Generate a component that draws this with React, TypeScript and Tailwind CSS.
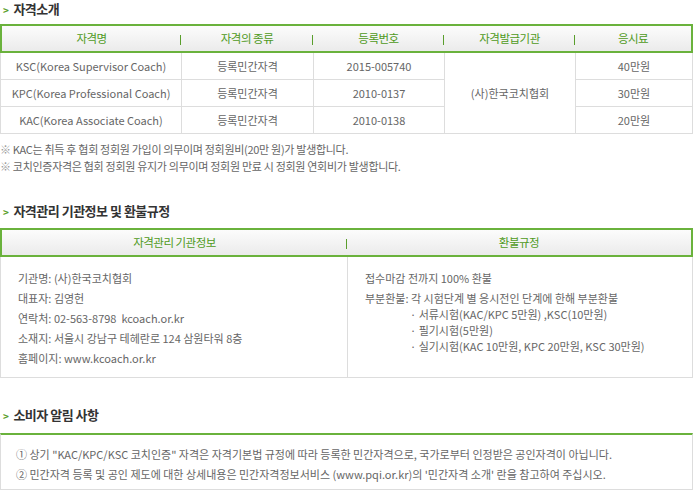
import React from 'react';

const font = { fontFamily: '"Noto Sans CJK KR", "Noto Sans", sans-serif' };

function SectionTitle({ children }: { children: React.ReactNode }) {
    return (
        <div className="flex items-center h-[18px] text-[13px] font-bold text-[#333] tracking-[-0.5px]">
            <span className="text-[#5a9e2c] text-[10px] font-bold ml-[3px] mr-[5px]">&gt;</span>
            {children}
        </div>
    );
}

function HeadCell({ children, sep = true }: { children: React.ReactNode; sep?: boolean }) {
    return (
        <div className="relative flex items-center justify-center text-[#4f9a22]">
            {children}
            {sep && <span className="absolute right-0 top-[9px] h-[10px] w-px bg-[#5a9e2c]" />}
        </div>
    );
}

const rows = [
    { name: 'KSC(Korea Supervisor Coach)', no: '2015-005740', fee: '40만원' },
    { name: 'KPC(Korea Professional Coach)', no: '2010-0137', fee: '30만원' },
    { name: 'KAC(Korea Associate Coach)', no: '2010-0138', fee: '20만원' },
];

export default function App() {
    return (
        <div className="w-[694px] h-[494px] bg-white text-[11px] text-[#666] overflow-hidden" style={font}>
            {/* 자격소개 */}
            <SectionTitle>자격소개</SectionTitle>
            <div className="mt-[6px] w-[693px]">
                <div className="grid grid-cols-[179px_132px_131px_131px_1fr] h-[29px] border-2 border-[#6ab23c] bg-gradient-to-b from-[#fcfcfc] to-[#ebebeb] text-[11.5px] tracking-[-0.5px]">
                    <HeadCell>자격명</HeadCell>
                    <HeadCell>자격의 종류</HeadCell>
                    <HeadCell>등록번호</HeadCell>
                    <HeadCell>자격발급기관</HeadCell>
                    <HeadCell sep={false}>응시료</HeadCell>
                </div>
                <div className="grid grid-cols-[181px_132px_131px_131px_1fr] grid-rows-[27px_27px_27px] border-l border-r border-[#ddd]">
                    {rows.map((r, i) => (
                        <React.Fragment key={r.no}>
                            <div className="flex items-center justify-center border-b border-r border-[#ddd]" style={{ gridRow: i + 1, gridColumn: 1 }}>{r.name}</div>
                            <div className="flex items-center justify-center border-b border-r border-[#ddd]" style={{ gridRow: i + 1, gridColumn: 2 }}>등록민간자격</div>
                            <div className="flex items-center justify-center border-b border-r border-[#ddd]" style={{ gridRow: i + 1, gridColumn: 3 }}>{r.no}</div>
                            <div className="flex items-center justify-center border-b border-[#ddd]" style={{ gridRow: i + 1, gridColumn: 5 }}>{r.fee}</div>
                        </React.Fragment>
                    ))}
                    <div className="row-span-3 col-start-4 row-start-1 flex items-center justify-center border-b border-r border-[#ddd]">
                        (사)한국코치협회
                    </div>
                </div>
            </div>
            <div className="mt-[7px] text-[11px] leading-[17px] tracking-[-0.3px]">
                <p><span className="text-[#999]">※</span> KAC는 취득 후 협회 정회원 가입이 의무이며 정회원비(20만 원)가 발생합니다.</p>
                <p><span className="text-[#999]">※</span> 코치인증자격은 협회 정회원 유지가 의무이며 정회원 만료 시 정회원 연회비가 발생합니다.</p>
            </div>

            {/* 자격관리 기관정보 및 환불규정 */}
            <div className="mt-[27px]">
                <SectionTitle>자격관리 기관정보 및 환불규정</SectionTitle>
            </div>
            <div className="mt-[8px] w-[693px]">
                <div className="grid grid-cols-[345px_1fr] h-[29px] border-2 border-[#6ab23c] bg-gradient-to-b from-[#fcfcfc] to-[#ebebeb] text-[11.5px] tracking-[-0.5px]">
                    <HeadCell>자격관리 기관정보</HeadCell>
                    <HeadCell sep={false}>환불규정</HeadCell>
                </div>
                <div className="grid grid-cols-[347px_1fr] h-[121px] border-l border-r border-b border-[#ddd]">
                    <div className="border-r border-[#ddd] pl-[17px] pt-[11px] leading-[20px]">
                        <p>기관명: (사)한국코치협회</p>
                        <p>대표자: 김영헌</p>
                        <p>연락처: 02-563-8798&nbsp;&nbsp;kcoach.or.kr</p>
                        <p>소재지: 서울시 강남구 테헤란로 124 삼원타워 8층</p>
                        <p>홈페이지: www.kcoach.or.kr</p>
                    </div>
                    <div className="pl-[17px] pt-[11px]">
                        <p className="leading-[20px]">접수마감 전까지 100% 환불</p>
                        <p className="leading-[20px]">부분환불: 각 시험단계 별 응시전인 단계에 한해 부분환불</p>
                        <div className="pl-[45px] leading-[16px] mt-[-2px]">
                            <p>· 서류시험(KAC/KPC 5만원) ,KSC(10만원)</p>
                            <p>· 필기시험(5만원)</p>
                            <p>· 실기시험(KAC 10만원, KPC 20만원, KSC 30만원)</p>
                        </div>
                    </div>
                </div>
            </div>

            {/* 소비자 알림 사항 */}
            <div className="mt-[28px]">
                <SectionTitle>소비자 알림 사항</SectionTitle>
            </div>
            <div className="mt-[9px] w-[693px] h-[57px] border-t-2 border-t-[#6ab23c] border-l border-r border-b border-[#ddd] pl-[15px] pt-[9px] leading-[20px]">
                <p>① 상기 "KAC/KPC/KSC 코치인증" 자격은 자격기본법 규정에 따라 등록한 민간자격으로, 국가로부터 인정받은 공인자격이 아닙니다.</p>
                <p>② 민간자격 등록 및 공인 제도에 대한 상세내용은 민간자격정보서비스 (www.pqi.or.kr)의 '민간자격 소개' 란을 참고하여 주십시오.</p>
            </div>
        </div>
    );
}
